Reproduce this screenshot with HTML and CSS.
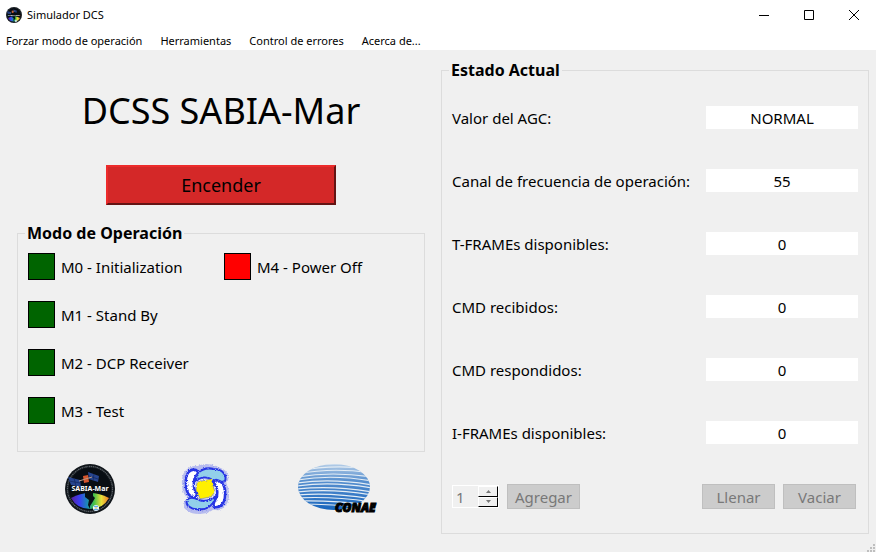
FILE: index.html
```html
<!DOCTYPE html>
<html lang="es">
<head>
<meta charset="utf-8">
<meta name="viewport" content="width=device-width, initial-scale=1">
<title>Simulador DCS</title>
<link rel="stylesheet" href="styles.css">
</head>
<body>
<header class="titlebar">
  <svg class="app-icon" viewBox="0 0 50 50" aria-hidden="true"><use href="#sabia-badge"/></svg>
  <span class="app-name">Simulador DCS</span>
  <div class="window-controls">
    <button type="button" aria-label="Minimizar"><svg viewBox="0 0 10 10"><path d="M0 5.5H10"/></svg></button>
    <button type="button" aria-label="Maximizar"><svg viewBox="0 0 10 10"><path d="M.5 .5H9.5V9.5H.5Z"/></svg></button>
    <button type="button" aria-label="Cerrar"><svg viewBox="0 0 10 10"><path d="M0 0L10 10M10 0L0 10"/></svg></button>
  </div>
</header>
<nav class="menubar">
  <a href="#">Forzar modo de operación</a>
  <a href="#">Herramientas</a>
  <a href="#">Control de errores</a>
  <a href="#">Acerca de...</a>
</nav>
<main class="content">
  <div class="left">
    <h1>DCSS SABIA-Mar</h1>
    <button type="button" class="power">Encender</button>
    <fieldset class="group modes-group">
      <legend>Modo de Operación</legend>
      <ul class="modes">
        <li><span class="lamp"></span>M0 - Initialization</li>
        <li><span class="lamp"></span>M1 - Stand By</li>
        <li><span class="lamp"></span>M2 - DCP Receiver</li>
        <li><span class="lamp"></span>M3 - Test</li>
        <li><span class="lamp active"></span>M4 - Power Off</li>
      </ul>
    </fieldset>
    <div class="logos">
      <svg class="logo-sabia" viewBox="0 0 50 50" role="img" aria-label="SABIA-Mar">
        <defs>
          <linearGradient id="spectrum" x1="0" x2="1" y1="0" y2="0">
            <stop offset="0" stop-color="#5a22a0"/>
            <stop offset=".22" stop-color="#3b3cf0"/>
            <stop offset=".42" stop-color="#1c86b8"/>
            <stop offset=".6" stop-color="#3fc04a"/>
            <stop offset=".8" stop-color="#e8e03a"/>
            <stop offset="1" stop-color="#f07a28"/>
          </linearGradient>
        </defs>
        <g id="sabia-badge">
          <circle cx="25" cy="25" r="25" fill="#10151a"/>
          <circle cx="25" cy="25" r="22.5" fill="none" stroke="#8d959b" stroke-width="1.3" stroke-dasharray="1 .7 1.5 .6" opacity=".6"/>
          <circle cx="25" cy="25" r="21" fill="#080d13"/>
          <path d="M6 34Q25 24 44 34Q38 45 25 45Q12 45 6 34Z" fill="url(#spectrum)"/>
          <path d="M20 29L28 29L28 32L30 34L27 39L25 42L25 45L23 41L24 36L20 33Z" fill="#061015"/>
          <path d="M3 13L15 16L16 23L6 21Z" fill="#27458f"/>
          <path d="M23 8L34 12L33 18L24 15Z" fill="#27458f"/>
          <path d="M4 17L15 19M9 14L11 22M24 12L33 15M29 10L28 17" stroke="#14275c" stroke-width=".7"/>
          <path d="M18 12L23 11L24 18L19 19Z" fill="#d4552d"/>
          <path d="M14 17L27 13" stroke="#ba9a85" stroke-width="1"/>
          <text x="25" y="27" text-anchor="middle" class="badge-text">SABIA-Mar</text>
          <circle cx="31" cy="44" r="3" fill="#fff"/>
          <path d="M29 42.500H33M29 45.500H33" stroke="#62aee2" stroke-width="1.300"/>
          <circle cx="31" cy="44" r=".8" fill="#edb634"/>
        </g>
      </svg>
      <svg class="logo-spiral" viewBox="0 0 50 50" role="img" aria-label="Logotipo de espiral">
        <defs>
          <filter id="rough" x="-10%" y="-10%" width="120%" height="120%" color-interpolation-filters="sRGB">
            <feTurbulence type="fractalNoise" baseFrequency=".8" numOctaves="2" seed="4"/>
            <feDisplacementMap in="SourceGraphic" scale="3" xChannelSelector="R" yChannelSelector="G"/>
          </filter>
        </defs>
        <g filter="url(#rough)" stroke-linejoin="round">
          <path d="M16 4C8 3 2 10 3 20C3 28 7 33 11 35C3 37 3 42 7 45C15 50 27 48 32 43C40 47 46 39 46 31C46 23 43 19 42 18C48 16 45 8 39 6C31 1 22 1 16 5Z" fill="none" stroke="#7c86ee" stroke-width="4" opacity=".5"/>
          <path d="M15 6C8 4 4 11 5 20C5 28 8 33 14 34L16 30C11 24 12 14 18 9Z" fill="#fff" stroke="#2735e4" stroke-width="2.500"/>
          <path d="M14 14C17 6 25 3 33 5C42 5 46 12 44 17C40 19 36 18 32 16C26 12 19 13 15 17Z" fill="#92d0ea" stroke="#2735e4" stroke-width="2"/>
          <path d="M35 16C42 17 45 24 44 31C44 40 39 44 33 43C31 40 34 37 36 32C37 26 35 21 32 18Z" fill="#fff" stroke="#2735e4" stroke-width="2.500"/>
          <path d="M35 33C32 41 26 46 18 45C10 46 4 41 6 36C9 32 14 34 18 36C24 38 30 36 35 32Z" fill="#92d0ea" stroke="#2735e4" stroke-width="2"/>
          <path d="M16 18L30 15L34 28L30 33L19 35L15 26Z" fill="#fff000" stroke="#5a63c8" stroke-width=".6"/>
        </g>
      </svg>
      <svg class="logo-conae" viewBox="0 0 80 52" role="img" aria-label="CONAE">
        <defs>
          <linearGradient id="globe" x1="0" y1="0" x2="0" y2="1">
            <stop offset="0" stop-color="#b6cee7"/>
            <stop offset=".35" stop-color="#5a91cf"/>
            <stop offset="1" stop-color="#1765bd"/>
          </linearGradient>
          <clipPath id="globe-clip"><ellipse cx="37" cy="24" rx="36" ry="23"/></clipPath>
        </defs>
        <ellipse cx="37" cy="24" rx="36" ry="23" fill="url(#globe)"/>
        <g clip-path="url(#globe-clip)" fill="none" stroke="#e4edf5" stroke-width="1.200">
          <path d="M0 5Q35 -2 75 2M0 8Q35 1 75 6M0 11Q35 4 75 10M0 14Q35 8 75 14M0 17Q35 11 75 18M0 20Q35 15 75 22M0 23Q35 18 75 25M0 26Q35 22 75 29M0 29Q35 25 75 32M0 32Q35 29 75 36M0 35Q35 33 75 39M0 38Q35 37 75 42M0 41Q35 41 75 45"/>
        </g>
        <text x="38" y="49" class="conae-text">CONAE</text>
      </svg>
    </div>
  </div>
  <fieldset class="group status">
    <legend>Estado Actual</legend>
    <div class="readings">
      <div class="reading"><label for="agc">Valor del AGC:</label><input id="agc" type="text" value="NORMAL" readonly></div>
      <div class="reading"><label for="canal">Canal de frecuencia de operación:</label><input id="canal" type="text" value="55" readonly></div>
      <div class="reading"><label for="tframes">T-FRAMEs disponibles:</label><input id="tframes" type="text" value="0" readonly></div>
      <div class="reading"><label for="recibidos">CMD recibidos:</label><input id="recibidos" type="text" value="0" readonly></div>
      <div class="reading"><label for="respondidos">CMD respondidos:</label><input id="respondidos" type="text" value="0" readonly></div>
      <div class="reading"><label for="iframes">I-FRAMEs disponibles:</label><input id="iframes" type="text" value="0" readonly></div>
    </div>
    <div class="actions">
      <div class="spinner">
        <input type="number" value="1" aria-label="Cantidad" disabled>
        <div class="steps">
          <button type="button" aria-label="Aumentar" disabled><svg viewBox="0 0 5 3"><path d="M0 3H5L2.500 0Z"/></svg></button>
          <button type="button" aria-label="Disminuir" disabled><svg viewBox="0 0 5 3"><path d="M0 0H5L2.500 3Z"/></svg></button>
        </div>
      </div>
      <button type="button" class="action" disabled>Agregar</button>
      <button type="button" class="action push" disabled>Llenar</button>
      <button type="button" class="action" disabled>Vaciar</button>
    </div>
  </fieldset>
</main>
<svg class="grip" viewBox="0 0 8 8" aria-hidden="true"><path d="M6 0h2v2h-2zM3 3h2v2h-2zM6 3h2v2h-2zM0 6h2v2h-2zM3 6h2v2h-2zM6 6h2v2h-2z"/></svg>
</body>
</html>
```
FILE: styles.css
```css
* {
  box-sizing: border-box;
}

body {
  margin: 0;
  min-height: 100vh;
  display: flex;
  flex-direction: column;
  background: #f0f0f0;
  color: #000;
  font: 15px/20px "Noto Sans", sans-serif;
}

button,
input {
  font: inherit;
  color: inherit;
  border-radius: 0;
  margin: 0;
  padding: 0;
}

.titlebar {
  display: flex;
  align-items: center;
  height: 30px;
  padding-left: 6px;
  background: #fff;
  font-size: 11px;
}

.app-icon {
  width: 16px;
  height: 16px;
  margin-right: 5px;
}

.window-controls {
  display: flex;
  align-self: stretch;
  margin-left: auto;
}

.window-controls button {
  display: grid;
  place-items: center;
  width: 45px;
  border: 0;
  background: none;
}

.window-controls svg {
  width: 10px;
  height: 10px;
  fill: none;
  stroke: #000;
}

.menubar {
  display: flex;
  gap: 18px;
  height: 20px;
  padding: 0 6px;
  background: #fff;
  font-size: 11px;
  line-height: 22px;
}

.menubar a {
  color: inherit;
  text-decoration: none;
}

.content {
  flex: 1;
  display: grid;
  grid-template-columns: 408fr 428fr;
  gap: 16px;
  padding: 10px 7px 18px 17px;
}

.left {
  display: flex;
  flex-direction: column;
}

h1 {
  margin: 27px 0 0;
  font-size: 36px;
  font-weight: 400;
  line-height: 48px;
  text-align: center;
}

.power {
  align-self: center;
  width: 230px;
  height: 40px;
  margin: 30px 0 18px;
  border: 2px solid;
  border-color: #ed2b2b #641414 #641414 #ed2b2b;
  background: #d42828;
  font-size: 18px;
}

.group {
  min-width: 0;
  margin: 0;
  border: 1px solid #dcdcdc;
}

.group legend {
  margin-left: -3px;
  padding: 0 2px;
  font-size: 16px;
  font-weight: 700;
}

.modes-group {
  height: 229px;
  padding: 10px;
}

.modes {
  display: grid;
  grid-template-rows: repeat(4, 27px);
  grid-auto-flow: column;
  grid-auto-columns: 1fr;
  gap: 21px 6px;
  margin: 0;
  padding: 0;
  list-style: none;
}

.modes li {
  display: flex;
  align-items: center;
  gap: 6px;
}

.lamp {
  width: 27px;
  height: 27px;
  border: 1px solid #000;
  background: #006400;
}

.lamp.active {
  background: #f00;
}

.logos {
  display: flex;
  align-items: center;
  justify-content: space-between;
  margin-top: 11px;
  padding: 0 48px;
}

.logo-sabia,
.logo-spiral {
  width: 50px;
  height: 50px;
}

.logo-conae {
  width: 80px;
  height: 52px;
  overflow: visible;
}

.badge-text {
  fill: #fff;
  font: 700 7px "Noto Sans", sans-serif;
}

.conae-text {
  font: italic 800 12px "Open Sans", sans-serif;
  stroke: #000;
  stroke-width: 1px;
}

.status {
  padding: 26px 10px 24px;
  display: flex;
  flex-direction: column;
}

.readings {
  display: flex;
  flex-direction: column;
  gap: 40px;
}

.reading {
  display: flex;
  align-items: center;
  justify-content: space-between;
}

.reading input {
  width: 152px;
  height: 23px;
  border: 0;
  background: #fff;
  text-align: center;
}

.actions {
  display: flex;
  align-items: center;
  gap: 8px;
  margin-top: auto;
  padding-right: 2px;
  color: #787878;
}

.spinner {
  display: flex;
  width: 47px;
  height: 23px;
  border: 1px solid #fff;
}

.spinner input {
  flex: 1;
  min-width: 0;
  padding-left: 3px;
  border: 0;
  background: none;
  appearance: textfield;
}

.spinner input::-webkit-inner-spin-button {
  appearance: none;
}

.steps {
  display: grid;
  width: 20px;
  grid-template-rows: 1fr 1fr;
}

.steps button {
  display: grid;
  place-items: center;
  border: 1px solid;
  border-color: #fff #000 #000 #fff;
  background: #f0f0f0;
}

.steps svg {
  width: 5px;
  height: 3px;
  fill: #787878;
}

.action {
  width: 73px;
  height: 25px;
  border: 1px solid #bfbfbf;
  background: #ccc;
}

.push {
  margin-left: auto;
}

.grip {
  position: absolute;
  right: 1px;
  bottom: 0;
  width: 8px;
  height: 8px;
  fill: #bfbfbf;
}
```
